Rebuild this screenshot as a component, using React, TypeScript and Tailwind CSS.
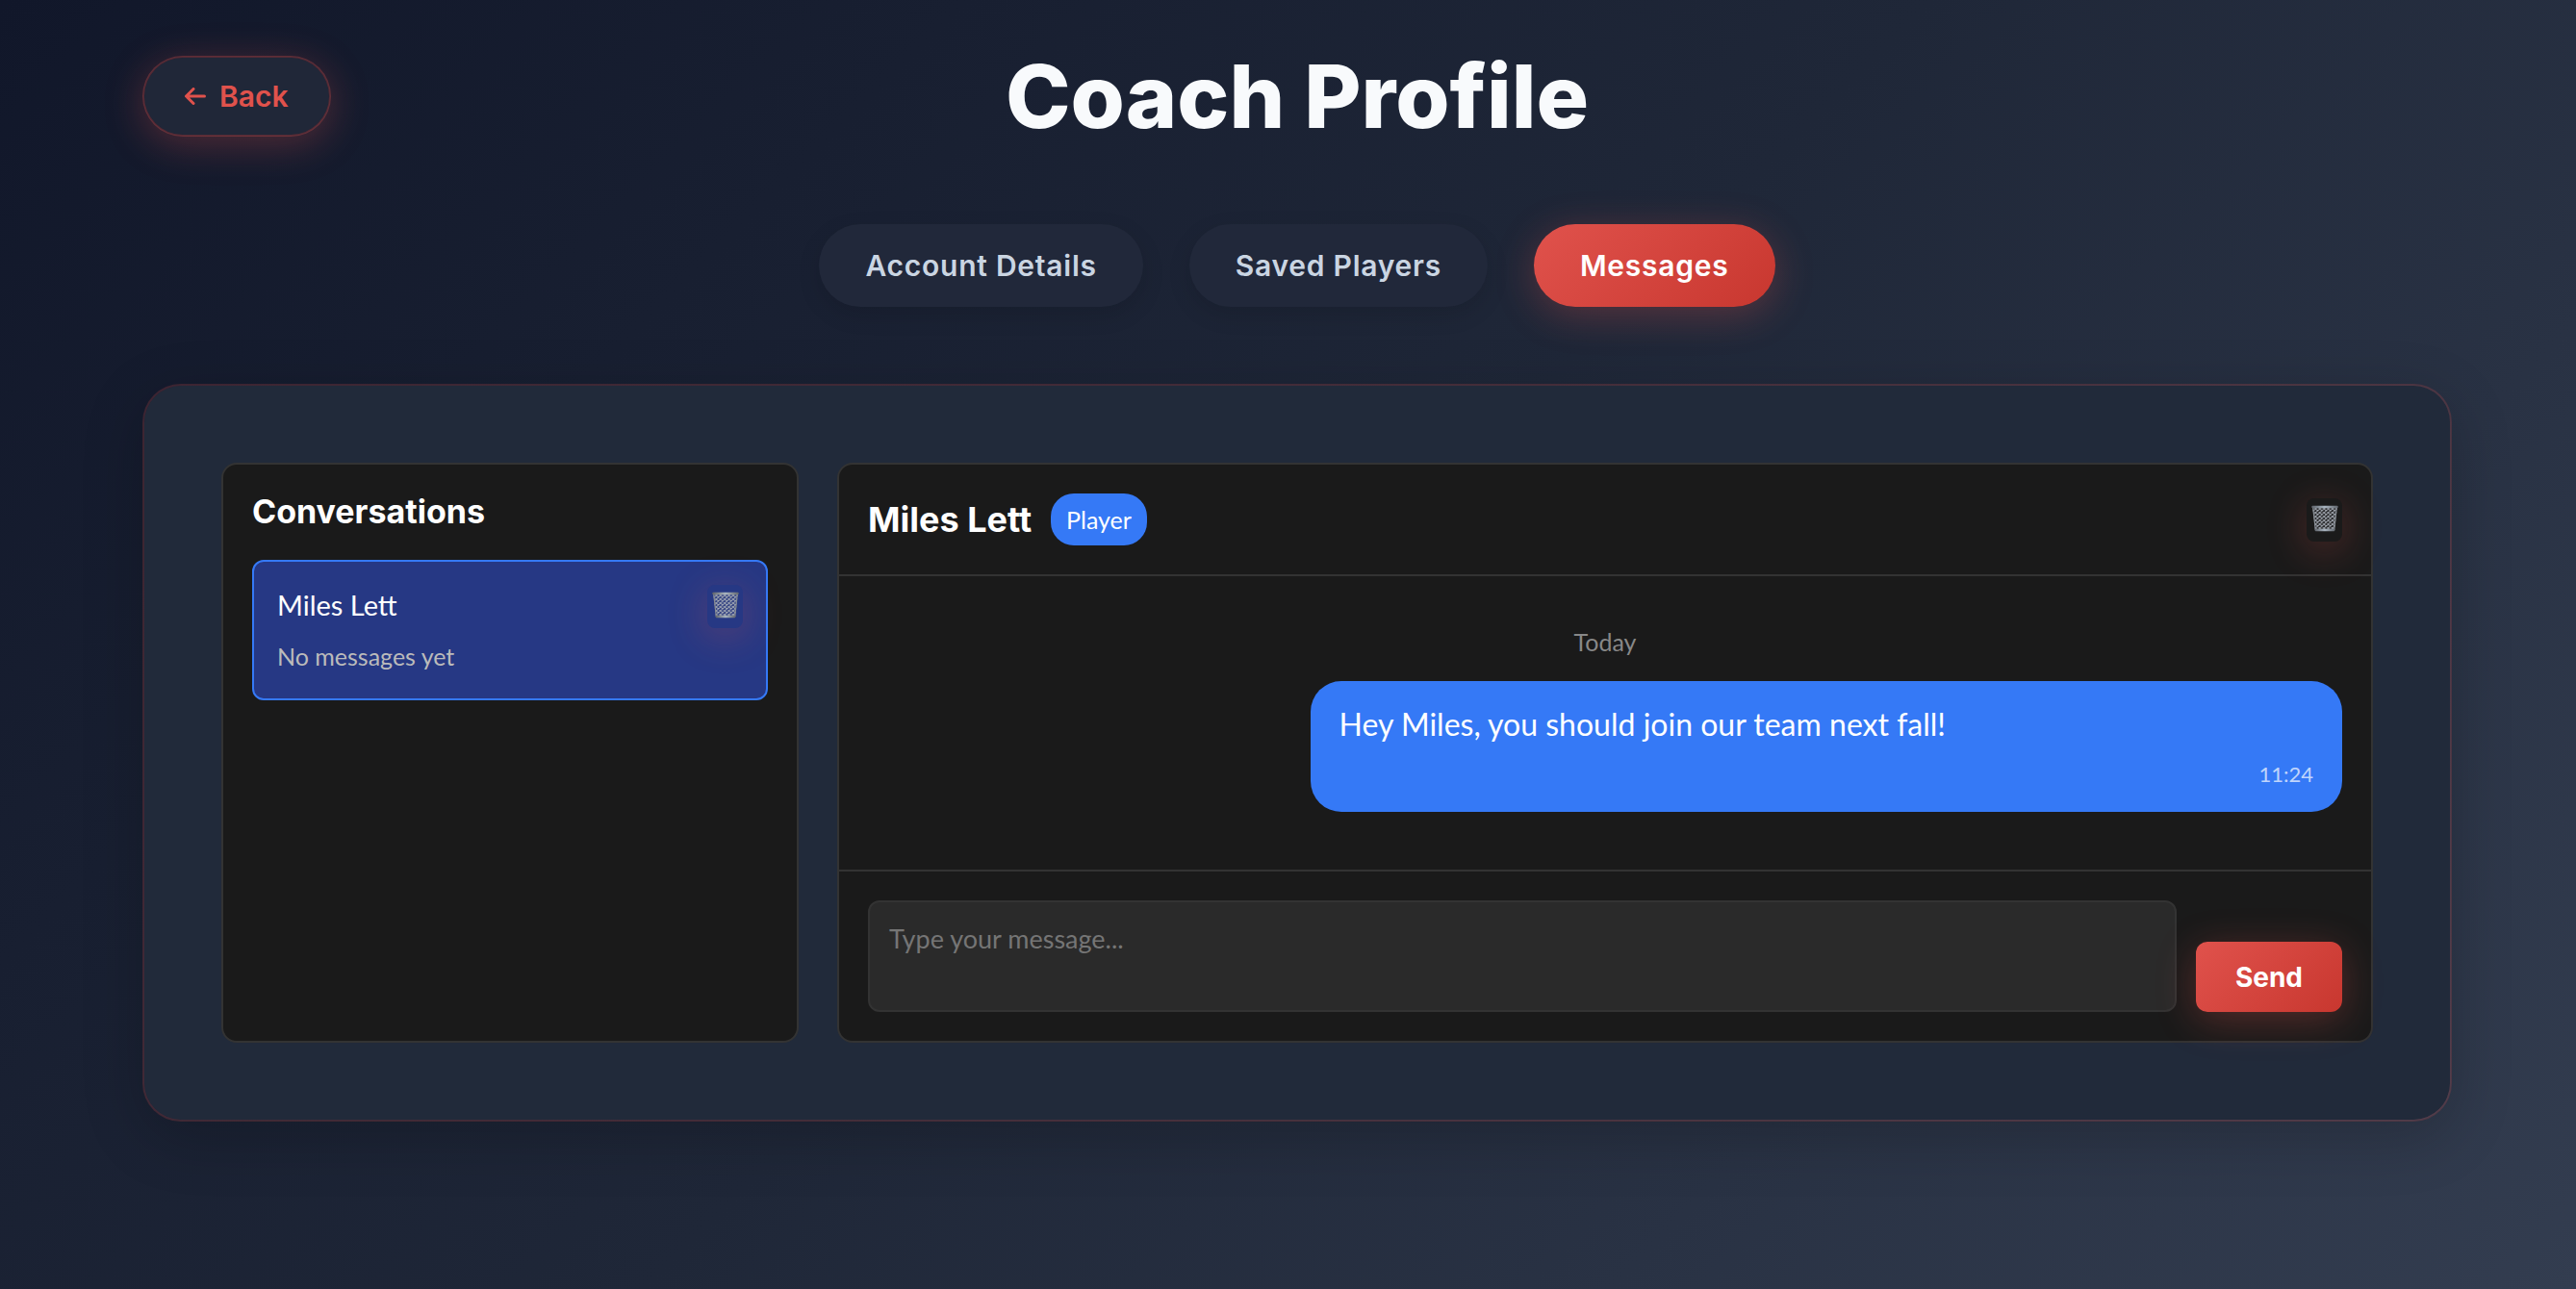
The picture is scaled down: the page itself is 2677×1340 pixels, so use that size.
import React, { useState } from 'react';

function ArrowLeft() {
  return (
    <svg viewBox="0 0 22 18" className="h-[18px] w-[22px]" fill="none" stroke="currentColor" strokeWidth="3" strokeLinecap="round" strokeLinejoin="round" aria-hidden="true">
      <path d="M20.5 9H1.8M9 1.5L1.5 9L9 16.5" />
    </svg>
  );
}

function Wastebasket({ id }: { id: string }) {
  return (
    <svg viewBox="0 0 28 28" className="size-7 shrink-0" aria-hidden="true">
      <defs>
        <pattern id={`${id}-mesh`} width="4.4" height="4" patternUnits="userSpaceOnUse">
          <path d="M0 0L4.4 4M4.4 0L0 4" stroke="#a9afb8" strokeWidth="0.9" />
        </pattern>
        <linearGradient id={`${id}-rim`} x1="0" x2="1">
          <stop offset="0" stopColor="#5f646b" />
          <stop offset="0.5" stopColor="#a9b5c0" />
          <stop offset="1" stopColor="#62676e" />
        </linearGradient>
      </defs>
      <path d="M1.2 2.5H26.8L24 26.5H4Z" fill="#70757d" fillOpacity="0.2" />
      <path d="M1.2 2.5H26.8L24 26.5H4Z" fill={`url(#${id}-mesh)`} />
      <path d="M1.8 3L4.3 26M26.2 3L23.7 26" stroke="#868b92" strokeWidth="1.2" />
      <rect x="0.2" y="0.8" width="27.6" height="2.4" rx="1.1" fill={`url(#${id}-rim)`} />
      <rect x="3.6" y="24.8" width="20.8" height="2.4" rx="1" fill={`url(#${id}-rim)`} />
    </svg>
  );
}

function DeleteButton({ id, label }: { id: string; label: string }) {
  return (
    <button
      type="button"
      aria-label={label}
      className="flex h-[45px] w-[37px] shrink-0 items-start justify-center rounded-lg bg-inherit pt-[7px] shadow-[0_8px_40px_rgba(224,82,76,0.3)]"
    >
      <Wastebasket id={id} />
    </button>
  );
}

const tabs = ['Account Details', 'Saved Players', 'Messages'];

export default function App() {
  const [active, setActive] = useState('Messages');
  const [draft, setDraft] = useState('');

  return (
    <div className="min-h-screen bg-linear-[135deg,#11172a_0%,#1f2738_50%,#333d50_100%] pt-10 pb-20 pl-[19px] font-['Lato',sans-serif] text-white">
      <div className="mx-auto max-w-[2400px]">
        <header className="grid h-[120px] grid-cols-[1fr_auto_1fr] items-center">
          <button
            type="button"
            className="flex h-[84px] items-center gap-3.5 justify-self-start rounded-full border-2 border-[#e0524c]/30 bg-[#202738] bg-clip-padding px-[42px] font-['Inter',sans-serif] text-[30px] font-semibold text-[#e0524c] shadow-[0_8px_40px_rgba(224,82,76,0.3)]"
          >
            <ArrowLeft />
            Back
          </button>
          <h1 className="font-['Inter',sans-serif] text-[91px] leading-[120px] font-extrabold text-slate-50">Coach Profile</h1>
        </header>

        <nav className="mt-[73px] flex justify-center gap-12">
          {tabs.map((tab) => (
            <button
              key={tab}
              type="button"
              onClick={() => setActive(tab)}
              aria-current={tab === active ? 'page' : undefined}
              className={
                tab === active
                  ? "h-[86px] rounded-full bg-linear-[135deg,#e0524c,#c8372f] px-12 font-['Inter',sans-serif] text-[30px] font-semibold tracking-wide text-white shadow-[0_8px_40px_rgba(224,82,76,0.3)]"
                  : "h-[86px] rounded-full bg-[#21283a] px-12 font-['Inter',sans-serif] text-[30px] font-semibold tracking-wide text-slate-300 shadow-[0_8px_24px_rgba(0,0,0,0.12)]"
              }
            >
              {tab}
            </button>
          ))}
        </nav>

        <main className="mt-20 grid grid-cols-[600px_1fr] gap-10 rounded-[40px] border-2 border-[#e0524c]/20 bg-[#212a3a] bg-clip-padding p-20 shadow-[0_16px_64px_rgba(0,0,0,0.2)]">
          <section className="rounded-2xl border-2 border-[#333333] bg-[#1a1a1a] p-[30px]">
            <h2 className="mb-[31px] font-['Inter',sans-serif] text-[34px] leading-[38px] font-bold">Conversations</h2>
            <ul>
              <li className="flex justify-between rounded-xl border-2 border-[#3579f6] bg-[#263884] px-6 pt-6 pb-[26px]">
                <div>
                  <p className="text-[29px] leading-[42px]">Miles Lett</p>
                  <p className="mt-3.5 text-[25px] leading-9 text-[#bbbbbb]">No messages yet</p>
                </div>
                <div className="bg-[#263884]">
                  <DeleteButton id="list-bin" label="Delete conversation with Miles Lett" />
                </div>
              </li>
            </ul>
          </section>

          <section className="flex flex-col rounded-2xl border-2 border-[#333333] bg-[#1a1a1a]">
            <div className="flex items-center justify-between rounded-t-2xl border-b-2 border-[#333333] p-[30px]">
              <div className="flex items-center gap-5">
                <h2 className="font-['Inter',sans-serif] text-[36px] leading-9 font-bold">Miles Lett</h2>
                <span className="rounded-3xl bg-[#3579f6] px-4 py-[9px] text-[25px] leading-9">Player</span>
              </div>
              <div className="bg-[#1a1a1a]">
                <DeleteButton id="chat-bin" label="Delete this conversation" />
              </div>
            </div>

            <div className="flex flex-1 flex-col px-[30px] pt-[50px] pb-[60px]">
              <p className="mb-[23px] text-center text-[25px] leading-9 text-[#888888]">Today</p>
              <article className="w-[70%] self-end rounded-[32px] bg-[#3579f6] px-[30px] pt-[23px] pb-[21px]">
                <p className="text-[32px] leading-[44px]">Hey Miles, you should join our team next fall!</p>
                <time className="mt-3 block text-right text-[22px] leading-9 text-white/70">11:24</time>
              </article>
            </div>

            <form onSubmit={(e) => e.preventDefault()} className="flex items-end gap-5 border-t-2 border-[#333333] p-[30px]">
              <textarea
                aria-label="Message"
                placeholder="Type your message..."
                value={draft}
                onChange={(e) => setDraft(e.target.value)}
                className="block h-[116px] flex-1 resize-none rounded-xl border-2 border-[#333333] bg-[#2a2a2a] px-5 py-[18px] text-[27px] leading-10 placeholder:text-[#757575]"
              />
              <button
                type="submit"
                className="h-[73px] rounded-xl bg-linear-[135deg,#e0524c,#c8372f] px-[41px] font-['Inter',sans-serif] text-[28px] font-bold text-white shadow-[0_8px_40px_rgba(224,82,76,0.3)]"
              >
                Send
              </button>
            </form>
          </section>
        </main>
      </div>
    </div>
  );
}
